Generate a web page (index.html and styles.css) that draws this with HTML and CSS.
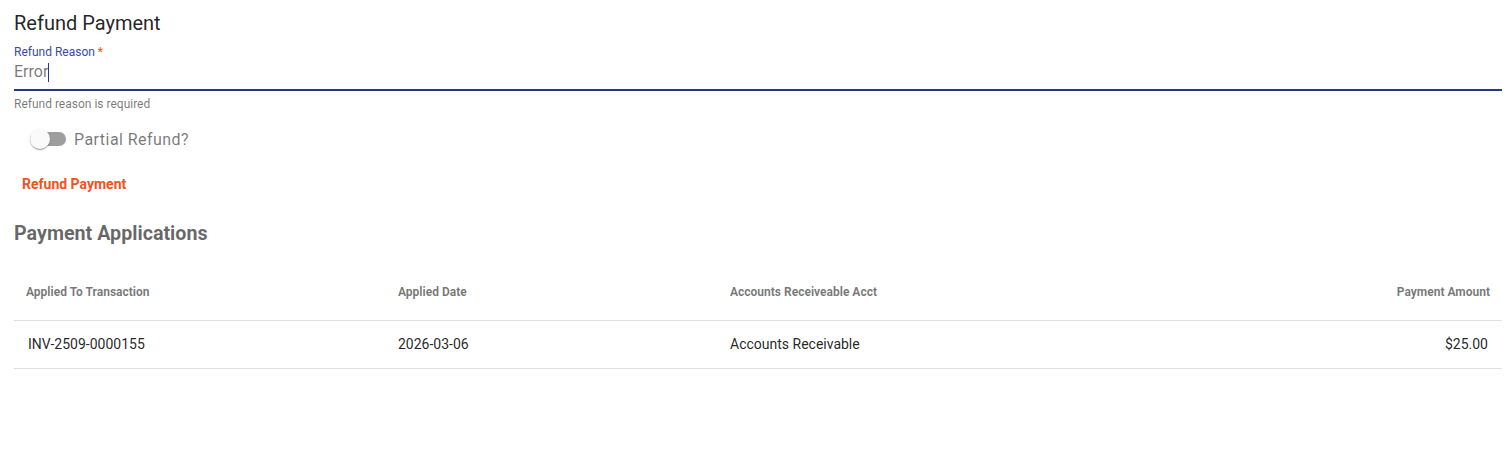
FILE: index.html
```html
<!DOCTYPE html>
<html lang="en">
<head>
    <meta charset="UTF-8">
    <title>Refund Payment</title>
    <link rel="stylesheet" href="styles.css">
</head>
<body>
    <div class="page">
        <h2 class="title">Refund Payment</h2>

        <div class="field">
            <label class="field-label">Refund Reason <span class="req">*</span></label>
            <div class="field-input">
                <span class="value">Error</span><span class="caret"></span>
            </div>
            <div class="field-hint">Refund reason is required</div>
        </div>

        <div class="toggle-row">
            <span class="toggle"><span class="track"></span><span class="thumb"></span></span>
            <span class="toggle-label">Partial Refund?</span>
        </div>

        <div class="actions">
            <button class="btn-text">Refund Payment</button>
        </div>

        <h3 class="section-title">Payment Applications</h3>

        <table class="grid">
            <thead>
                <tr>
                    <th class="c1">Applied To Transaction</th>
                    <th class="c2">Applied Date</th>
                    <th class="c3">Accounts Receiveable Acct</th>
                    <th class="num">Payment Amount</th>
                </tr>
            </thead>
            <tbody>
                <tr>
                    <td>INV-2509-0000155</td>
                    <td>2026-03-06</td>
                    <td>Accounts Receivable</td>
                    <td class="num">$25.00</td>
                </tr>
            </tbody>
        </table>
    </div>
</body>
</html>
```

FILE: styles.css
```css
* {
    margin: 0;
    padding: 0;
    box-sizing: border-box;
}

body {
    font-family: Roboto, "Helvetica Neue", Arial, sans-serif;
    background: #fff;
    color: rgba(0, 0, 0, 0.87);
}

.page {
    padding: 11px 8px 0 14px;
}

.title {
    font-size: 20px;
    font-weight: 400;
    line-height: 24px;
    color: rgba(0, 0, 0, 0.87);
}

.field {
    margin-top: 10px;
}

.field-label {
    display: block;
    font-size: 12px;
    line-height: 14px;
    color: #3949ab;
}

.field-label .req {
    color: #f4511e;
}

/* text line plus the focused underline */
.field-input {
    display: flex;
    align-items: flex-start;
    height: 30px;
    padding-top: 1px;
    margin-top: 2px;
    border-bottom: 2px solid #283593;
}

.field-input .value {
    font-size: 16px;
    line-height: 20px;
    color: rgba(0, 0, 0, 0.54);
}

.field-input .caret {
    display: inline-block;
    width: 1px;
    height: 19px;
    margin-top: 1px;
    background: #283593;
}

.field-hint {
    margin-top: 6px;
    font-size: 12px;
    line-height: 14px;
    color: rgba(0, 0, 0, 0.54);
}

.toggle-row {
    display: flex;
    align-items: center;
    gap: 8px;
    margin-top: 16px;
    padding-left: 16px;
    height: 24px;
}

.toggle {
    position: relative;
    width: 36px;
    height: 20px;
    display: inline-block;
}

.toggle .track {
    position: absolute;
    left: 0;
    top: 3px;
    width: 36px;
    height: 14px;
    border-radius: 7px;
    background: #9e9e9e;
}

.toggle .thumb {
    position: absolute;
    left: 0;
    top: 0;
    width: 20px;
    height: 20px;
    border-radius: 50%;
    background: #fafafa;
    box-shadow: 0 2px 1px -1px rgba(0, 0, 0, 0.2), 0 1px 1px 0 rgba(0, 0, 0, 0.14), 0 1px 3px 0 rgba(0, 0, 0, 0.12);
}

.toggle-label {
    font-size: 16px;
    color: rgba(0, 0, 0, 0.54);
    letter-spacing: 0.45px;
}

.actions {
    margin-top: 23px;
}

.btn-text {
    background: none;
    border: none;
    font-family: inherit;
    font-size: 14px;
    font-weight: 700;
    color: #f4511e;
    padding: 0 8px;
    line-height: 20px;
    cursor: pointer;
}

.section-title {
    margin-top: 28px;
    font-size: 19.7px;
    font-weight: 700;
    line-height: 24px;
    color: rgba(0, 0, 0, 0.6);
}

.grid {
    width: 100%;
    border-collapse: collapse;
    margin-top: 18px;
}

.grid th {
    font-size: 12px;
    font-weight: 700;
    color: rgba(0, 0, 0, 0.54);
    text-align: left;
    height: 56px;
    padding: 0 14px;
    border-bottom: 1px solid #e0e0e0;
}

.grid th:first-child {
    padding-left: 12px;
}

.grid th:last-child {
    padding-right: 12px;
}

.grid td {
    font-size: 14px;
    color: rgba(0, 0, 0, 0.87);
    height: 48px;
    padding: 0 14px;
    border-bottom: 1px solid #e0e0e0;
}

.grid .c1 { width: 370px; }
.grid .c2 { width: 332px; }
.grid .c3 { width: 500px; }

.grid .num {
    text-align: right;
}
```
